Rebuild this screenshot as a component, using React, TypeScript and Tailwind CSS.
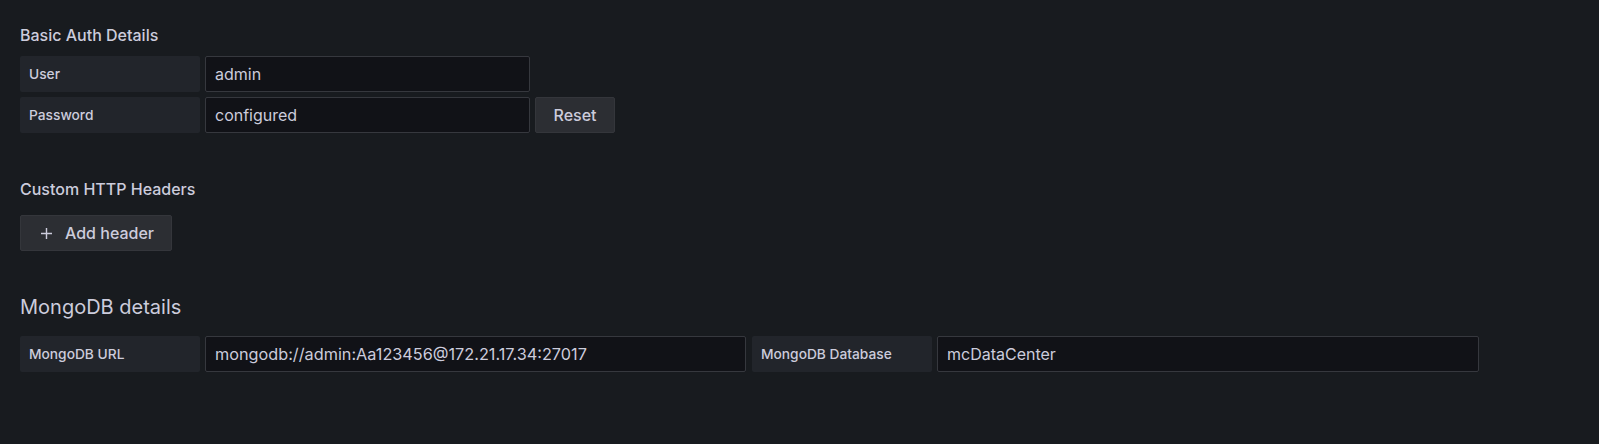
import React from "react";

const font = { fontFamily: "Inter, 'Noto Sans', sans-serif" };

function Label({ children }: { children: React.ReactNode }) {
  return (
    <div className="flex h-[36px] w-[180px] shrink-0 items-center rounded-[2px] bg-[#22252b] pl-[9px] text-[13.75px] font-medium text-[#ccccdc]">
      {children}
    </div>
  );
}

function Input({ value, w }: { value: string; w: string }) {
  return (
    <div
      className={`flex h-[36px] ${w} shrink-0 items-center rounded-[2px] border border-[#36383e] bg-[#111217] pl-[9px] text-[16px] text-[#ccccdc]`}
    >
      {value}
    </div>
  );
}

export default function App() {
  return (
    <div
      className="h-[444px] w-full bg-[#181b1f] pl-[20px] pt-[23px] text-[#ccccdc]"
      style={font}
    >
      <div className="h-[24px] text-[16px] font-medium leading-[24px]">Basic Auth Details</div>
      <div className="mt-[9px] flex flex-col gap-[5px]">
        <div className="flex gap-[5px]">
          <Label>User</Label>
          <Input value="admin" w="w-[325px]" />
        </div>
        <div className="flex gap-[5px]">
          <Label>Password</Label>
          <Input value="configured" w="w-[325px]" />
          <button className="flex h-[36px] w-[80px] items-center justify-center rounded-[2px] border border-[#34363b] bg-[#2c2e33] text-[16px] font-medium text-[#ccccdc]">
            Reset
          </button>
        </div>
      </div>

      <div className="mt-[44px] h-[24px] text-[16px] font-medium leading-[24px]">Custom HTTP Headers</div>
      <button className="mt-[14px] flex h-[36px] w-[152px] items-center rounded-[2px] border border-[#34363b] bg-[#2c2e33] pl-[19px] text-[16px] font-medium text-[#ccccdc]">
        <svg width="13" height="13" viewBox="0 0 13 13" className="mr-[12px]">
          <path d="M6.5 1v11M1 6.5h11" stroke="#ccccdc" strokeWidth="1.4" fill="none" />
        </svg>
        Add header
      </button>

      <div className="mt-[42px] h-[28px] text-[20px] leading-[28px]">MongoDB details</div>
      <div className="mt-[15px] flex">
        <Label>MongoDB URL</Label>
        <div className="ml-[5px]">
          <div className="flex h-[36px] w-[541px] shrink-0 items-center rounded-[2px] border border-[#36383e] bg-[#111217] pl-[9px] text-[16.25px] text-[#ccccdc]">
            mongodb://admin:Aa123456@172.21.17.34:27017
          </div>
        </div>
        <div className="ml-[6px]">
          <Label>MongoDB Database</Label>
        </div>
        <div className="ml-[5px]">
          <Input value="mcDataCenter" w="w-[542px]" />
        </div>
      </div>
    </div>
  );
}
